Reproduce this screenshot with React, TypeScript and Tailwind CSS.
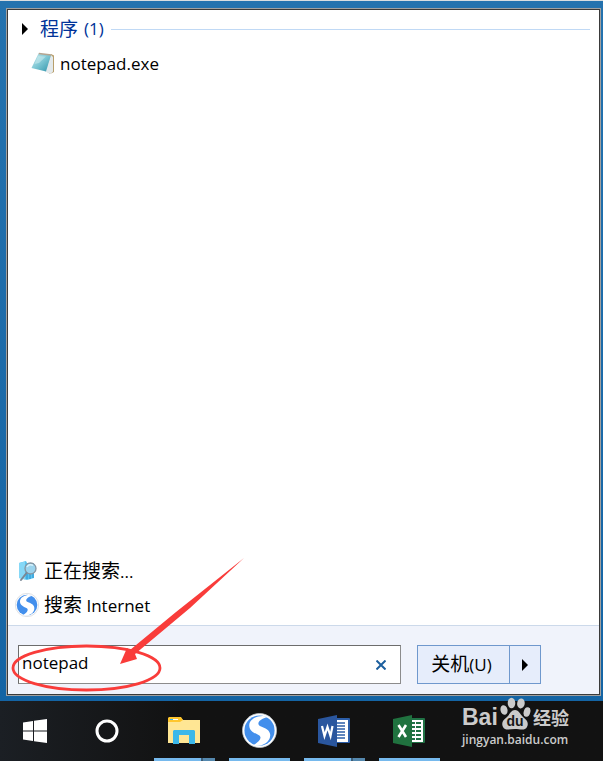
import { useState } from 'react';

function NotepadIcon() {
  return (
    <svg viewBox="0 0 24 24" className="h-6 w-6 shrink-0" aria-hidden="true">
      <defs>
        <linearGradient id="pad" x1="0" y1="0" x2="1" y2="1">
          <stop offset="0" stopColor="#c8ebf0" />
          <stop offset="0.5" stopColor="#7cc6d3" />
          <stop offset="1" stopColor="#2f93aa" />
        </linearGradient>
      </defs>
      <path d="M20 2L23 3.500V20L19 22L15 19Z" fill="#b89f6c" />
      <path d="M20 3L22 5V19.500L19.500 22L14 19.500Z" fill="#e3e9ec" />
      <path d="M7.500 1.500L20 3L15 19.500L0.500 16Z" fill="url(#pad)" />
      <path d="M8 0.800L20.500 2.300L20 3.800L7.500 2.300Z" fill="#b5a590" />
      <path d="M7 4L15 4.500L8 11L3.500 12Z" fill="#d3eff2" opacity="0.5" />
    </svg>
  );
}

function FolderSearchIcon() {
  return (
    <svg viewBox="0 0 20 22" className="h-[22px] w-5 shrink-0" aria-hidden="true">
      <path d="M1 3L8 1L9 3L16 3V18L9 20L1 18Z" fill="#5bc3ee" />
      <path d="M1 3L7 1.500V19.500L1 18Z" fill="#86d8f7" />
      <path d="M9 11V19M12 13V19M15 13V18" stroke="#3ba4dc" strokeWidth="1.500" />
      <circle cx="12.500" cy="8.500" r="5.500" fill="#9bd4ee" stroke="#8795a1" strokeWidth="1.300" />
      <path d="M9 7A4 4 0 0 1 15 5.500" stroke="#d8f2fc" strokeWidth="1.500" fill="none" />
      <path d="M8.500 13L3 20" stroke="#7b8894" strokeWidth="2" strokeLinecap="round" />
    </svg>
  );
}

function SogouIcon({ className }: { className: string }) {
  return (
    <svg viewBox="0 0 36 36" className={className} aria-hidden="true">
      <circle cx="18" cy="18" r="17.500" fill="#fff" stroke="#c3c7cc" strokeWidth="0.800" />
      <circle cx="18" cy="18" r="15.500" fill="#438fec" />
      <path
        d="M27 4C19 1 8 5 7.500 12C7 18.500 13 20.500 17 22.500C21 24.500 19 29 12 33C19 35.500 28.500 31 29 23.500C29.500 17.500 24 15.500 19 13.500C14.500 11.500 17 6 27 4Z"
        fill="#fff"
      />
    </svg>
  );
}

function WindowsIcon() {
  return (
    <svg viewBox="0 0 24 24" className="h-6 w-6" fill="#fff" aria-hidden="true">
      <path d="M0 3.500L10 2V11.500H0ZM11 1.800L24 0V11.500H11ZM0 12.500H10V22L0 20.500ZM11 12.500H24V24L11 22.200Z" />
    </svg>
  );
}

function CortanaIcon() {
  return (
    <svg viewBox="0 0 24 24" className="h-6 w-6" aria-hidden="true">
      <circle cx="12" cy="12" r="10" fill="none" stroke="#fff" strokeWidth="3" />
    </svg>
  );
}

function ExplorerIcon() {
  return (
    <svg viewBox="0 0 32 28" className="h-7 w-8" aria-hidden="true">
      <path d="M0 1H13L15 3H32V26H0Z" fill="#ffe694" />
      <path d="M1 0H13L15 3L12 5H0V1Z" fill="#ffc62d" />
      <rect x="2" y="2" width="8" height="1" fill="#fff" />
      <rect x="2" y="2" width="3" height="1" fill="#39b6e8" />
      <path d="M5 14L6 13H26L27 14V27H21V18H11V27H5Z" fill="#3cb8e9" />
    </svg>
  );
}

function WordIcon() {
  return (
    <svg viewBox="0 0 32 32" className="h-8 w-8" aria-hidden="true">
      <rect x="17" y="3" width="15" height="25" rx="1" fill="#2b5da8" />
      <rect x="17" y="5" width="13" height="22" fill="#fff" />
      <path d="M17 8H27M17 11H27M17 14H27M17 17H27M17 20H27M17 23H27" stroke="#2b5da8" strokeWidth="1.500" />
      <path d="M0 4L19 0V32L0 28Z" fill="#2a569e" />
      <path d="M4 11L6.500 21L9.500 12L12.500 21L14.500 11" fill="none" stroke="#fff" strokeWidth="2.200" />
    </svg>
  );
}

function ExcelIcon() {
  return (
    <svg viewBox="0 0 32 32" className="h-8 w-8" aria-hidden="true">
      <rect x="17" y="3" width="15" height="25" rx="1" fill="#207245" />
      <rect x="17" y="5" width="13" height="22" fill="#fff" />
      <path d="M19 8H22M19 12H22M19 16H22M19 20H22M19 24H22M23 8H28M23 12H28M23 16H28M23 20H28M23 24H28" stroke="#207245" strokeWidth="2" />
      <path d="M0 4L19 0V32L0 28Z" fill="#20723f" />
      <path d="M5.500 10L13 22M13 10L5.500 22" stroke="#fff" strokeWidth="2.600" />
    </svg>
  );
}

const apps = [
  { name: '文件资源管理器', icon: <ExplorerIcon />, stacked: true },
  { name: '搜狗浏览器', icon: <SogouIcon className="h-[35px] w-[35px]" />, stacked: false },
  { name: 'Word', icon: <WordIcon />, stacked: true },
  { name: 'Excel', icon: <ExcelIcon />, stacked: false },
];

function Taskbar() {
  return (
    <nav className="flex h-[60px] shrink-0 bg-gradient-to-r from-[#1b1f24] via-[#121212] via-30% to-[#121212]">
      <button aria-label="开始" className="flex w-[70px] items-center justify-center">
        <WindowsIcon />
      </button>
      <button aria-label="Cortana" className="flex w-[74px] items-center justify-center">
        <CortanaIcon />
      </button>
      <div className="flex gap-[14px] pl-[10px]">
        {apps.map((app) => (
          <button key={app.name} aria-label={app.name} className="flex w-[61px] flex-col">
            <span className="flex w-[60px] flex-1 items-center justify-center pt-[2px]">{app.icon}</span>
            <span className="flex h-[3px] w-full bg-[#76b9ed]">
              {app.stacked && <span className="ml-auto w-[14px] border-l-2 border-[#3c5e79] bg-[#5588ae]" />}
            </span>
          </button>
        ))}
      </div>
    </nav>
  );
}

function Watermark() {
  return (
    <div className="pointer-events-none absolute right-[34px] bottom-[13px] w-[107px] text-[#cbcbcb]">
      <div className="flex h-[34px] items-end justify-between">
        <span className="font-[Liberation_Sans] text-[23px] leading-[27px] font-bold">Bai</span>
        <svg viewBox="0 0 32 34" className="h-[34px] w-8 shrink-0" aria-hidden="true">
          <g fill="#cbcbcb">
            <ellipse cx="12.500" cy="6" rx="3.800" ry="5.300" />
            <ellipse cx="22" cy="6.500" rx="3.800" ry="5" transform="rotate(8 22 6)" />
            <ellipse cx="5" cy="13" rx="3.500" ry="4.800" transform="rotate(-15 5 13)" />
            <ellipse cx="28" cy="15" rx="3.300" ry="4.800" transform="rotate(15 28 15)" />
            <path d="M16 13C20 13 21 17 24 20C28 23 30 26 28 30C26 34 21 32 16 32C11 32 6 34 4 30C2 26 4 23 8 20C11 17 12 13 16 13Z" />
          </g>
          <text x="16" y="29" textAnchor="middle" fill="#171717" fontFamily="Liberation Sans, sans-serif" fontSize="14" fontWeight="700">
            du
          </text>
        </svg>
        <span className="font-['Noto_Sans_CJK_SC'] text-[18px] leading-[27px] font-bold">经验</span>
      </div>
      <div className="font-[Open_Sans] text-[12px] leading-[17px] font-semibold whitespace-nowrap">jingyan.baidu.com</div>
    </div>
  );
}

export default function App() {
  const [query, setQuery] = useState('notepad');

  return (
    <div className="relative flex min-h-screen flex-col overflow-hidden bg-[#1666a8] font-['Open_Sans','Noto_Sans_CJK_SC',sans-serif] text-[17px] text-black">
      <main className="flex flex-1 flex-col border-t border-[#d9dde0] bg-gradient-to-b from-[#2472ae] to-[#1464a4] pt-[7px] pr-[2px] pb-[5px] pl-[6px]">
        <div className="flex flex-1 flex-col border border-[#a0a0a0]">
          <div className="flex flex-1 flex-col border border-[#3a3a3a] bg-white">
            <section>
              <h2 className="flex h-[38px] items-center gap-[7px] pr-[9px] pl-[14px] text-[#003399]">
                <svg viewBox="0 0 6 12" className="h-3 w-[6px]" aria-hidden="true">
                  <path d="M0 0L6 6L0 12Z" fill="#000" />
                </svg>
                <span className="pl-[5px] text-[19px]">程序</span>
                <span className="-ml-[1px]">(1)</span>
                <span className="h-px flex-1 bg-[#c0d9f5]" />
              </h2>
              <a href="#notepad" className="flex h-8 items-center gap-[5px] pl-[23px]">
                <NotepadIcon />
                notepad.exe
              </a>
            </section>

            <section className="mt-auto pb-[3px]">
              <a href="#searching" className="flex h-[34px] items-center gap-[6px] pl-[10px]">
                <FolderSearchIcon />
                <span>
                  <span className="text-[19px]">正在搜索</span>...
                </span>
              </a>
              <a href="#internet" className="flex h-[34px] items-center gap-[5px] pl-[7px]">
                <SogouIcon className="h-6 w-6 shrink-0" />
                <span>
                  <span className="text-[19px]">搜索</span> Internet
                </span>
              </a>
            </section>

            <footer className="flex shrink-0 items-center gap-4 border-t border-[#ccd9ea] bg-[#f0f3fb] pt-[19px] pr-[58px] pb-[10px] pl-[10px]">
              <div className="flex h-[39px] min-w-0 flex-1 items-center border border-[#8c8c8c] border-t-[#6c6c6c] border-l-[#6c6c6c] bg-white">
                <input
                  aria-label="搜索程序和文件"
                  value={query}
                  onChange={(e) => setQuery(e.target.value)}
                  className="h-full min-w-0 flex-1 bg-transparent pb-1 pl-[3px] outline-none"
                />
                <button aria-label="清除" onClick={() => setQuery('')} className="flex h-full w-[38px] items-center justify-center">
                  <svg viewBox="0 0 10 10" className="h-[10px] w-[10px]" aria-hidden="true">
                    <path d="M0.500 0.500L9.500 9.500M9.500 0.500L0.500 9.500" stroke="#1c5f9e" strokeWidth="2" />
                  </svg>
                </button>
              </div>
              <div className="flex h-[39px] border border-[#6f98cd] bg-[#e6edfb]">
                <button className="w-[92px] border-r border-[#6f98cd] pr-1">
                  <span className="text-[19px]">关机</span>(U)
                </button>
                <button aria-label="更多选项" className="flex w-[30px] items-center justify-center">
                  <svg viewBox="0 0 6 12" className="h-3 w-[6px]" aria-hidden="true">
                    <path d="M0 0L6 6L0 12Z" fill="#000" />
                  </svg>
                </button>
              </div>
            </footer>
          </div>
        </div>
      </main>

      <Taskbar />
      <Watermark />

      <svg viewBox="0 0 240 136" className="pointer-events-none absolute bottom-[67px] left-2 h-[136px] w-[240px]" aria-hidden="true">
        <ellipse cx="78.500" cy="110" rx="73.500" ry="22" fill="none" stroke="#f93c3a" strokeWidth="2.800" />
        <path d="M236 0L182 50L127 96L129 101L112 106L119 90L122 92L168 54Z" fill="#f93c3a" />
      </svg>
    </div>
  );
}
